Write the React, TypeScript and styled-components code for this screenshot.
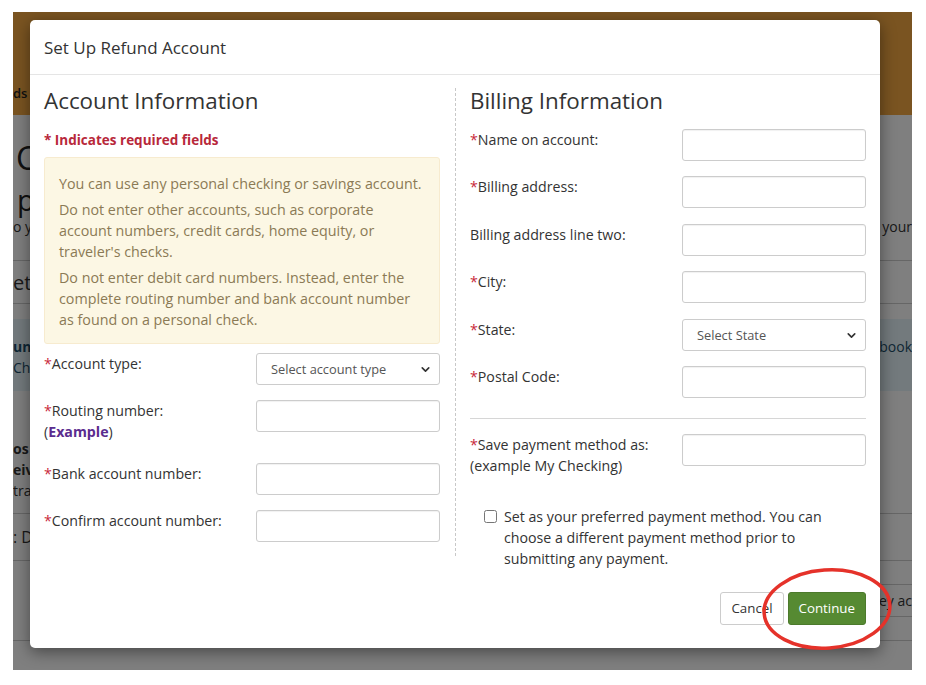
import styled, { createGlobalStyle } from "styled-components";
import { ChevronDown } from "lucide-react";

const GlobalStyle = createGlobalStyle`
  html, body {
    margin: 0;
    padding: 0;
    background: #ffffff;
  }
  body {
    font-family: "Open Sans", "Noto Sans", Arial, sans-serif;
  }
  * { box-sizing: border-box; }
`;

// --- page behind the dialog (only its edges show) ---
const Screen = styled.div`
  position: relative;
  width: 899px;
  height: 658px;
  margin: 12px 0 0 13px;
  overflow: hidden;
  background: #ffffff;
`;
const TopBar = styled.div`
  height: 103px;
  background: #f4a943;
  display: flex;
  align-items: flex-end;
  padding-bottom: 13px;
`;
const NavLink = styled.span`
  font-size: 13px;
  font-weight: 600;
  color: #222;
`;
const PageTitle = styled.h1`
  margin: 27px 0 0 3px;
  font-size: 32px;
  line-height: 32px;
  font-weight: 400;
  color: #222;
`;
const PageSub = styled.h2`
  margin: 10px 0 0 4px;
  font-size: 29px;
  line-height: 32px;
  font-weight: 400;
  color: #222;
`;
const PageRow = styled.div<{ $h: number; $tone?: string; $line?: boolean; $pad?: number }>`
  height: ${(p) => p.$h}px;
  display: flex;
  justify-content: space-between;
  align-items: ${(p) => (p.$pad !== undefined ? "flex-start" : "center")};
  padding-top: ${(p) => p.$pad || 0}px;
  background: ${(p) => p.$tone || "transparent"};
  border-bottom: ${(p) => (p.$line ? "1px solid #ccc" : "none")};
  white-space: nowrap;
`;
const RowText = styled.span<{ $size?: number; $bold?: boolean; $color?: string }>`
  font-size: ${(p) => p.$size || 14}px;
  font-weight: ${(p) => (p.$bold ? 700 : 400)};
  color: ${(p) => p.$color || "#333"};
  line-height: 21px;
`;
const Stack = styled.div`
  display: flex;
  flex-direction: column;
`;
const GhostBtn = styled.span`
  border: 1px solid #ccc;
  border-right: none;
  padding: 6px 0 6px 6px;
  font-size: 14px;
  color: #333;
`;
const Backdrop = styled.div`
  position: absolute;
  inset: 0;
  background: rgba(0, 0, 0, 0.5);
`;

// --- dialog ---
const Modal = styled.div`
  position: absolute;
  left: 17px;
  top: 8px;
  width: 850px;
  background: #fff;
  border-radius: 5px;
  box-shadow: 0 4px 16px rgba(0, 0, 0, 0.45);
  color: #333;
`;
const ModalHeader = styled.div`
  height: 55px;
  padding: 0 14px;
  display: flex;
  align-items: center;
  border-bottom: 1px solid #e5e5e5;
`;
const ModalTitle = styled.h4`
  margin: 0;
  font-size: 17px;
  font-weight: 400;
  color: #333;
`;
const ModalBody = styled.div`
  display: grid;
  grid-template-columns: 412px 410px;
  padding: 13px 14px 0;
`;
const LeftCol = styled.div`
  align-self: start;
  padding: 0 15px 14px 0;
  border-right: 1px dashed #c8c8c8;
`;
const RightCol = styled.div`
  padding-left: 14px;
`;
const SectionTitle = styled.h3`
  margin: 0;
  font-size: 22.4px;
  line-height: 26px;
  font-weight: 400;
  color: #333;
`;
const RequiredNote = styled.p`
  margin: 16px 0 7px;
  font-size: 13.5px;
  line-height: 20px;
  font-weight: 700;
  color: #b8283a;
`;
const Notice = styled.div`
  background: #fcf7e4;
  border: 1px solid #f7ebcf;
  border-radius: 3px;
  padding: 15px 12px 13px 14px;
  color: #8b7a55;
  font-size: 14.3px;
  line-height: 21px;
  p {
    margin: 0 0 5px;
  }
  p:last-child {
    margin-bottom: 0;
  }
`;
const FieldList = styled.div<{ $top: number }>`
  display: flex;
  flex-direction: column;
  gap: 15.4px;
  margin-top: ${(p) => p.$top}px;
`;
const Field = styled.div`
  display: grid;
  grid-template-columns: 1fr 184px;
  align-items: start;
`;
const Label = styled.label`
  font-size: 14.2px;
  line-height: 21px;
  padding: 0 0 5px;
  color: #333;
`;
const Star = styled.span`
  color: #c8283a;
`;
const ExampleLink = styled.a`
  color: #5b2c8f;
  font-weight: 700;
  text-decoration: none;
`;
const TextInput = styled.input`
  width: 184px;
  height: 32px;
  border: 1px solid #ccc;
  border-radius: 3px;
  box-shadow: inset 0 1px 1px rgba(0, 0, 0, 0.06);
  padding: 4px 8px;
  font: inherit;
  background: #fff;
`;
const SelectWrap = styled.div`
  position: relative;
  width: 184px;
  height: 32px;
  svg {
    position: absolute;
    right: 8px;
    top: 10px;
    pointer-events: none;
    color: #333;
  }
`;
const Select = styled.select`
  appearance: none;
  width: 100%;
  height: 100%;
  border: 1px solid #ccc;
  border-radius: 3px;
  background: #fff;
  padding: 0 24px 0 14px;
  font-family: "Open Sans", Arial, sans-serif;
  font-size: 12.8px;
  color: #555;
`;
const Rule = styled.hr`
  border: none;
  border-top: 1px solid #d6d6d6;
  margin: 20px 0 15px;
`;
const CheckRow = styled.label`
  display: flex;
  gap: 7px;
  margin: 25px 30px 0 14px;
  font-size: 14.2px;
  line-height: 21px;
  color: #333;
  input {
    margin: 4px 0 0;
    width: 13px;
    height: 13px;
    flex: none;
  }
`;
const Footer = styled.div`
  display: flex;
  justify-content: flex-end;
  gap: 4px;
  padding: 23px 14px 23px;
`;
const Button = styled.button<{ $primary?: boolean }>`
  height: 33px;
  padding: 0 10px;
  border-radius: 3px;
  font-family: "Open Sans", Arial, sans-serif;
  font-size: 13.3px;
  border: 1px solid ${(p) => (p.$primary ? "#4c7a2c" : "#ccc")};
  background: ${(p) => (p.$primary ? "#568a32" : "#fff")};
  color: ${(p) => (p.$primary ? "#fff" : "#333")};
`;
const Annotation = styled.svg`
  position: absolute;
  left: 748px;
  top: 554px;
  pointer-events: none;
`;

const App = () => {
  return (
    <>
      <GlobalStyle />
      <Screen>
        <TopBar>
          <NavLink>ds</NavLink>
        </TopBar>
        <PageTitle>C</PageTitle>
        <PageSub>p</PageSub>
        <PageRow $h={45} $line $pad={0}>
          <RowText>o y</RowText>
          <RowText>your</RowText>
        </PageRow>
        <PageRow $h={43} $line>
          <RowText $size={20}>et</RowText>
        </PageRow>
        <PageRow $h={15} />
        <PageRow $h={72} $tone="#e6f4fa" $pad={17}>
          <Stack>
            <RowText $bold $color="#1d4e6a">un</RowText>
            <RowText $color="#1d4e6a">Ch</RowText>
          </Stack>
          <RowText $color="#1d4e6a">book</RowText>
        </PageRow>
        <PageRow $h={35} />
        <PageRow $h={88} $line>
          <Stack>
            <RowText $bold>os</RowText>
            <RowText $bold>eiv</RowText>
            <RowText>tra</RowText>
          </Stack>
        </PageRow>
        <PageRow $h={47} $line>
          <RowText $size={16}>: D</RowText>
        </PageRow>
        <PageRow $h={80} $line>
          <span />
          <GhostBtn>ey ac</GhostBtn>
        </PageRow>
        <PageRow $h={20} />
        <Backdrop />

        <Modal>
          <ModalHeader>
            <ModalTitle>Set Up Refund Account</ModalTitle>
          </ModalHeader>
          <ModalBody>
            <LeftCol>
              <SectionTitle>Account Information</SectionTitle>
              <RequiredNote>* Indicates required fields</RequiredNote>
              <Notice>
                <p>You can use any personal checking or savings account.</p>
                <p>
                  Do not enter other accounts, such as corporate account numbers, credit cards, home
                  equity, or traveler's checks.
                </p>
                <p>
                  Do not enter debit card numbers. Instead, enter the complete routing number and bank
                  account number as found on a personal check.
                </p>
              </Notice>
              <FieldList $top={9}>
                <Field>
                  <Label>
                    <Star>*</Star>Account type:
                  </Label>
                  <SelectWrap>
                    <Select defaultValue="">
                      <option value="">Select account type</option>
                      <option>Checking</option>
                      <option>Savings</option>
                    </Select>
                    <ChevronDown size={13} strokeWidth={3} />
                  </SelectWrap>
                </Field>
                <Field>
                  <Label>
                    <Star>*</Star>Routing number:
                    <br />(<ExampleLink href="#">Example</ExampleLink>)
                  </Label>
                  <TextInput />
                </Field>
                <Field>
                  <Label>
                    <Star>*</Star>Bank account number:
                  </Label>
                  <TextInput />
                </Field>
                <Field>
                  <Label>
                    <Star>*</Star>Confirm account number:
                  </Label>
                  <TextInput />
                </Field>
              </FieldList>
            </LeftCol>

            <RightCol>
              <SectionTitle>Billing Information</SectionTitle>
              <FieldList $top={15}>
                <Field>
                  <Label>
                    <Star>*</Star>Name on account:
                  </Label>
                  <TextInput />
                </Field>
                <Field>
                  <Label>
                    <Star>*</Star>Billing address:
                  </Label>
                  <TextInput />
                </Field>
                <Field>
                  <Label>Billing address line two:</Label>
                  <TextInput />
                </Field>
                <Field>
                  <Label>
                    <Star>*</Star>City:
                  </Label>
                  <TextInput />
                </Field>
                <Field>
                  <Label>
                    <Star>*</Star>State:
                  </Label>
                  <SelectWrap>
                    <Select defaultValue="">
                      <option value="">Select State</option>
                    </Select>
                    <ChevronDown size={13} strokeWidth={3} />
                  </SelectWrap>
                </Field>
                <Field>
                  <Label>
                    <Star>*</Star>Postal Code:
                  </Label>
                  <TextInput />
                </Field>
              </FieldList>
              <Rule />
              <Field>
                <Label>
                  <Star>*</Star>Save payment method as:
                  <br />
                  (example My Checking)
                </Label>
                <TextInput />
              </Field>
              <CheckRow>
                <input type="checkbox" />
                <span>
                  Set as your preferred payment method. You can choose a different payment method prior
                  to submitting any payment.
                </span>
              </CheckRow>
            </RightCol>
          </ModalBody>
          <Footer>
            <Button>Cancel</Button>
            <Button $primary>Continue</Button>
          </Footer>
        </Modal>

        <Annotation width="136" height="90" viewBox="0 0 136 90">
          <ellipse
            cx="66"
            cy="43"
            rx="63"
            ry="39"
            fill="none"
            stroke="#e5322a"
            strokeWidth="3.5"
            transform="rotate(-4 66 43)"
          />
        </Annotation>
      </Screen>
    </>
  );
};

export default App;
